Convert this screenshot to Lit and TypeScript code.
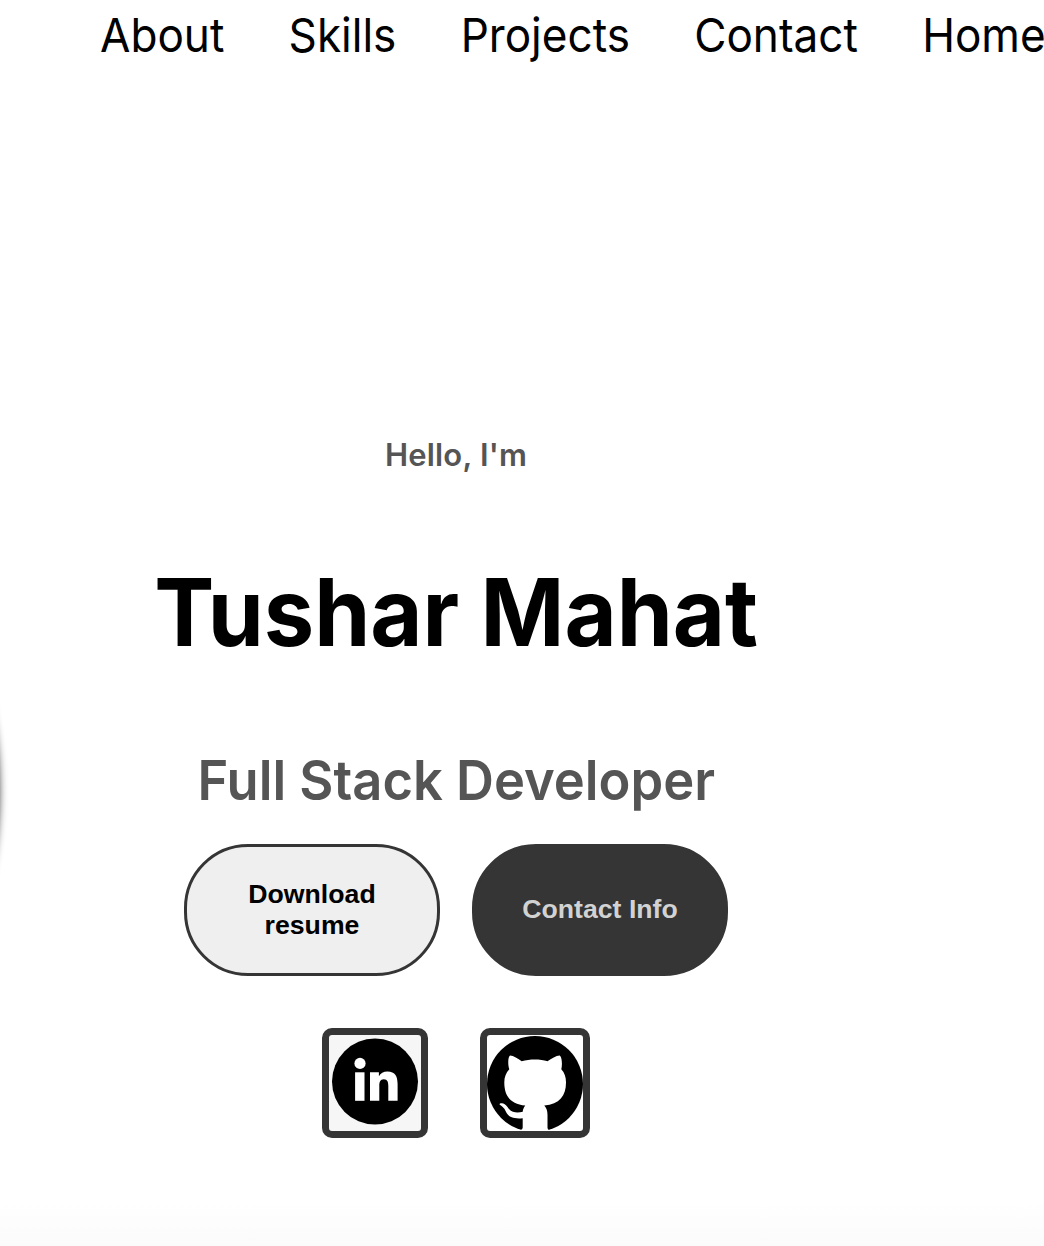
import { LitElement, html, css, svg } from "lit";
import { customElement } from "lit/decorators.js";

const linkedin = svg`
  <circle cx="46" cy="46.6" r="43" fill="#000"/>
  <circle cx="31" cy="28.4" r="5.6" fill="#fff"/>
  <rect x="26.1" y="37.3" width="9.4" height="28.5" fill="#fff"/>
  <path fill="#fff" d="M41 37.3h8.900v3.900c1.600-2.800 4.600-4.800 8.500-4.800 8 0 10.200 5.200 10.200 12.600v16.800h-9.300V51c0-3.700-.7-6.800-4.500-6.800s-4.500 3.100-4.500 6.700v14.900h-9.300z"/>`;

const github = svg`
  <circle cx="48" cy="49" r="48" fill="#000"/>
  <path fill="#fff" d="M23 20.500C26.500 20.800 31 23.300 34.700 26.300C43 24 53 24 60.500 26.300C64.500 23.300 69 20.800 72.700 20.500C75 22 75.500 30 74.300 34.300C77.600 38 79 42 79 47.500C79 61 72.500 69 57.300 70.600C59.500 73 60.500 76 60.500 80V92.500Q60.500 94.500 62 95V97H33.500V95Q35.700 94.500 35.700 92.500V83.300C22.500 84.500 20.500 79.500 18.800 76.500C17.500 73 14.500 71 12.800 69.800C12 68.500 13.500 68 15 68.200C18.500 68.500 20.500 72 22 74C25.500 78 31 78 35.700 76.800C36 74 37 72 38.300 70.500C23.500 69 17.300 61 17.300 47.500C17.300 42 19 38 22.300 34.300C20.800 30 20.800 22 23 20.500Z"/>`;

@customElement("app-root")
export class AppRoot extends LitElement {
  static styles = css`
    :host {
      display: block;
    }
    .page {
      position: relative;
      box-sizing: border-box;
      width: 1044px;
      height: 1246px;
      overflow: hidden;
      background: linear-gradient(#fff 0, #fff 1200px, #fbfbfb 1246px);
      font-family: Inter, "Liberation Sans", sans-serif;
      color: #000;
    }
    .photo {
      position: absolute;
      left: -802px;
      top: 390px;
      width: 800px;
      height: 800px;
      border-radius: 50%;
      box-shadow: 0 0 10px #000;
    }
    .nav {
      display: flex;
      gap: 68.5px;
      margin-left: 99.5px;
      height: 69px;
      align-items: center;
      font-size: 47px;
      white-space: nowrap;
      transform: scaleX(0.938);
      transform-origin: 0 50%;
    }
    .hero {
      display: flex;
      flex-direction: column;
      align-items: center;
      width: 912px;
      padding-top: 367px;
      white-space: nowrap;
    }
    .hello {
      margin: 0;
      font-size: 31px;
      line-height: 38px;
      font-weight: 600;
      letter-spacing: 0.2px;
      color: #555;
    }
    .name {
      margin: 80px 0 0;
      font-size: 94px;
      line-height: 116px;
      font-weight: 700;
      transform: scaleX(0.958);
    }
    .role {
      margin: 76px 0 0;
      font-size: 55px;
      line-height: 68px;
      font-weight: 600;
      transform: scaleX(0.954);
      color: #555;
    }
    .buttons {
      display: flex;
      gap: 32px;
      margin-top: 30px;
    }
    .btn {
      box-sizing: border-box;
      width: 256px;
      height: 132px;
      padding: 0 50px;
      border: 3px solid #353535;
      border-radius: 64px;
      background: #efefef;
      color: #000;
      font: bold 26.667px/31px "Liberation Sans", Arial, sans-serif;
      white-space: normal;
    }
    .btn.dark {
      padding: 0 20px 2px;
      background: #353535;
      color: #d2d2d2;
    }
    .socials {
      display: flex;
      gap: 52px;
      margin-top: 52px;
    }
    .social {
      display: block;
      border: 7px solid #353535;
      border-radius: 10px;
      background: #fff;
    }
    .social.soft {
      background: #f6f6f6;
    }
    .social svg {
      display: block;
    }
  `;

  render() {
    return html`
      <div class="page">
        <div class="photo"></div>
        <nav class="nav">
          <span>About</span><span>Skills</span><span>Projects</span><span>Contact</span><span>Home</span>
        </nav>
        <main class="hero">
          <p class="hello">Hello, I'm</p>
          <h1 class="name">Tushar Mahat</h1>
          <p class="role">Full Stack Developer</p>
          <div class="buttons">
            <button class="btn">Download resume</button>
            <button class="btn dark">Contact Info</button>
          </div>
          <div class="socials">
            <a class="social soft"><svg width="92" height="96" viewBox="0 0 92 96">${linkedin}</svg></a>
            <a class="social"><svg width="96" height="96" viewBox="0 0 96 96">${github}</svg></a>
          </div>
        </main>
      </div>
    `;
  }
}
